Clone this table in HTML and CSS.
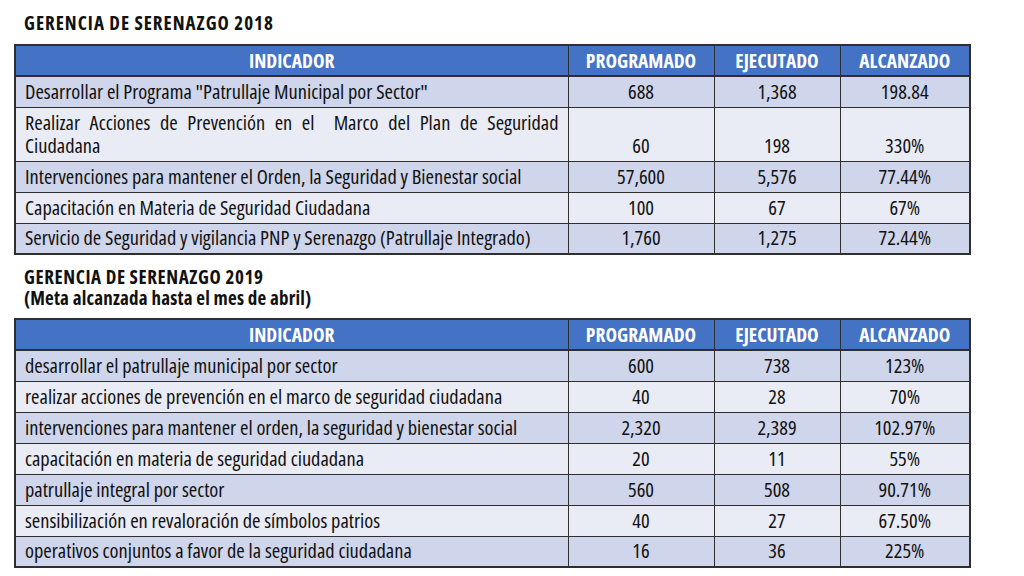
FILE: index.html
```html
<!DOCTYPE html>
<html lang="es">
<head>
<meta charset="utf-8">
<link rel="stylesheet" href="styles.css">
</head>
<body>
<div class="page">
  <h2 class="title t1">GERENCIA DE SERENAZGO 2018</h2>
  <table class="grid">
    <colgroup><col class="c1"><col class="c2"><col class="c3"><col class="c4"></colgroup>
    <thead>
      <tr><th>INDICADOR</th><th>PROGRAMADO</th><th>EJECUTADO</th><th>ALCANZADO</th></tr>
    </thead>
    <tbody>
      <tr class="odd"><td>Desarrollar el Programa "Patrullaje Municipal por Sector"</td><td>688</td><td>1,368</td><td>198.84</td></tr>
      <tr class="even tall"><td class="just">Realizar Acciones de Prevención en el&nbsp; Marco del Plan de Seguridad Ciudadana</td><td>60</td><td>198</td><td>330%</td></tr>
      <tr class="odd"><td>Intervenciones para mantener el Orden, la Seguridad y Bienestar social</td><td>57,600</td><td>5,576</td><td>77.44%</td></tr>
      <tr class="even"><td>Capacitación en Materia de Seguridad Ciudadana</td><td>100</td><td>67</td><td>67%</td></tr>
      <tr class="odd"><td>Servicio de Seguridad y vigilancia PNP y Serenazgo (Patrullaje Integrado)</td><td>1,760</td><td>1,275</td><td>72.44%</td></tr>
    </tbody>
  </table>
  <div class="title t2">
    <div class="line">GERENCIA DE SERENAZGO 2019</div>
    <div class="line sub">(Meta alcanzada hasta el mes de abril)</div>
  </div>
  <table class="grid">
    <colgroup><col class="c1"><col class="c2"><col class="c3"><col class="c4"></colgroup>
    <thead>
      <tr><th>INDICADOR</th><th>PROGRAMADO</th><th>EJECUTADO</th><th>ALCANZADO</th></tr>
    </thead>
    <tbody>
      <tr class="odd"><td>desarrollar el patrullaje municipal por sector</td><td>600</td><td>738</td><td>123%</td></tr>
      <tr class="even"><td>realizar acciones de prevención en el marco de seguridad ciudadana</td><td>40</td><td>28</td><td>70%</td></tr>
      <tr class="odd"><td>intervenciones para mantener el orden, la seguridad y bienestar social</td><td>2,320</td><td>2,389</td><td>102.97%</td></tr>
      <tr class="even"><td>capacitación en materia de seguridad ciudadana</td><td>20</td><td>11</td><td>55%</td></tr>
      <tr class="odd"><td>patrullaje integral por sector</td><td>560</td><td>508</td><td>90.71%</td></tr>
      <tr class="even"><td>sensibilización en revaloración de símbolos patrios</td><td>40</td><td>27</td><td>67.50%</td></tr>
      <tr class="odd"><td>operativos conjuntos a favor de la seguridad ciudadana</td><td>16</td><td>36</td><td>225%</td></tr>
    </tbody>
  </table>
</div>
</body>
</html>
```
FILE: styles.css
```css
html, body {
  margin: 0;
  padding: 0;
  background: #ffffff;
}
body {
  font-family: "Open Sans", "Roboto Condensed", sans-serif;
  font-stretch: 75%;
  color: #111111;
}
.page {
  width: 1024px;
  height: 576px;
  padding: 0 0 0 14px;
  box-sizing: border-box;
  overflow: hidden;
}
.title {
  margin: 0;
  padding-left: 10px;
  font-size: 19px;
  font-weight: bold;
  line-height: 21px;
  color: #111111;
  box-sizing: border-box;
}
.t1 {
  height: 44px;
  padding-top: 13px;
  letter-spacing: 1px;
}
.t2 {
  padding-top: 12px;
  height: 63px;
}
.t2 .line {
  height: 21px;
  letter-spacing: 0.6px;
}
.t2 .sub {
  letter-spacing: 0.2px;
}
.grid {
  border-collapse: collapse;
  width: 955px;
  table-layout: fixed;
  border: 2px solid #2f2f2f;
}
.c1 { width: 553px; }
.c2 { width: 146px; }
.c3 { width: 126px; }
.c4 { width: 130px; }
.grid th {
  background: #4472c4;
  color: #ffffff;
  font-weight: bold;
  font-size: 19.5px;
  height: 31px;
  padding: 0 0 1px;
  border: 1px solid #2f2f2f;
  border-bottom: 2px solid #2f2f2f;
  box-sizing: border-box;
}
.grid td {
  font-size: 20.4px;
  line-height: 24px;
  height: 31px;
  padding: 0 9px 2px;
  text-align: center;
  border: 1px solid #2f2f2f;
  box-sizing: border-box;
  white-space: nowrap;
}
.grid td:first-child {
  text-align: left;
}
.grid tr.odd td { background: #cfd5ea; }
.grid tr.even td { background: #e9ebf5; }
.grid tr.tall td {
  height: 54px;
  vertical-align: bottom;
  padding-bottom: 4px;
}
.grid td.just {
  white-space: normal;
  text-align: justify;
  line-height: 23px;
}
```
